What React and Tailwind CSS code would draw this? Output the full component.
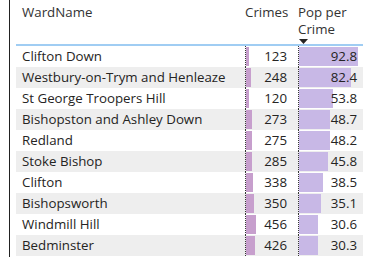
const rows = [
  ["Clifton Down", 123, 92.8],
  ["Westbury-on-Trym and Henleaze", 248, 82.4],
  ["St George Troopers Hill", 120, 53.8],
  ["Bishopston and Ashley Down", 273, 48.7],
  ["Redland", 275, 48.2],
  ["Stoke Bishop", 285, 45.8],
  ["Clifton", 338, 38.5],
  ["Bishopsworth", 350, 35.1],
  ["Windmill Hill", 456, 30.6],
  ["Bedminster", 426, 30.3],
];

export default function App() {
  return (
    <div
      className="w-[372px] h-[257px] overflow-hidden bg-white flex text-[13.3px] text-[#252423]"
      style={{ fontFamily: '"Open Sans", "Noto Sans", sans-serif' }}
    >
      <div className="ml-[9px] w-[1px] h-full bg-[#222]" />
      <div className="ml-[6px] w-[347px] flex flex-col">
        <div className="h-[44px] grid grid-cols-[229px_42px_11px_65px] leading-[17px] pt-[4px]">
          <div className="pl-[6px] text-[#333]">WardName</div>
          <div className="text-right text-[#333]">Crimes</div>
          <div />
          <div className="text-[#333] flex flex-col">
            <span>Pop per</span>
            <span>Crime</span>
            <svg width="9" height="5" viewBox="0 0 9 5" className="ml-[1px] mt-[1px]">
              <polygon points="0,0 9,0 4.5,5" fill="#252423" />
            </svg>
          </div>
        </div>
        <div className="h-[2px] bg-[#a0cdf3]" />
        {rows.map(([name, crimes, pop], i) => (
          <div
            key={name}
            className={`h-[21px] grid grid-cols-[229px_53px_65px] items-stretch ${
              i % 2 === 1 ? "bg-[#eeeeee]" : "bg-white"
            }`}
          >
            <div className="pl-[6px] flex items-center whitespace-nowrap">{name}</div>
            <div className="relative border-l border-dotted border-[#333] flex items-center justify-end pr-[11px]">
              <div
                className="absolute left-0 top-[1px] bottom-[1px] bg-[#c79fcd]"
                style={{ width: `${(crimes * 10) / 456}px` }}
              />
              <span className="relative">{crimes}</span>
            </div>
            <div className="relative border-l border-dotted border-[#333] flex items-center justify-end pr-[6px]">
              <div
                className="absolute left-0 top-[1px] bottom-[1px] bg-[#c8b8e6]"
                style={{ width: `${(pop / 92.8) * 59}px` }}
              />
              <span className="relative">{pop.toFixed(1)}</span>
            </div>
          </div>
        ))}
      </div>
    </div>
  );
}
